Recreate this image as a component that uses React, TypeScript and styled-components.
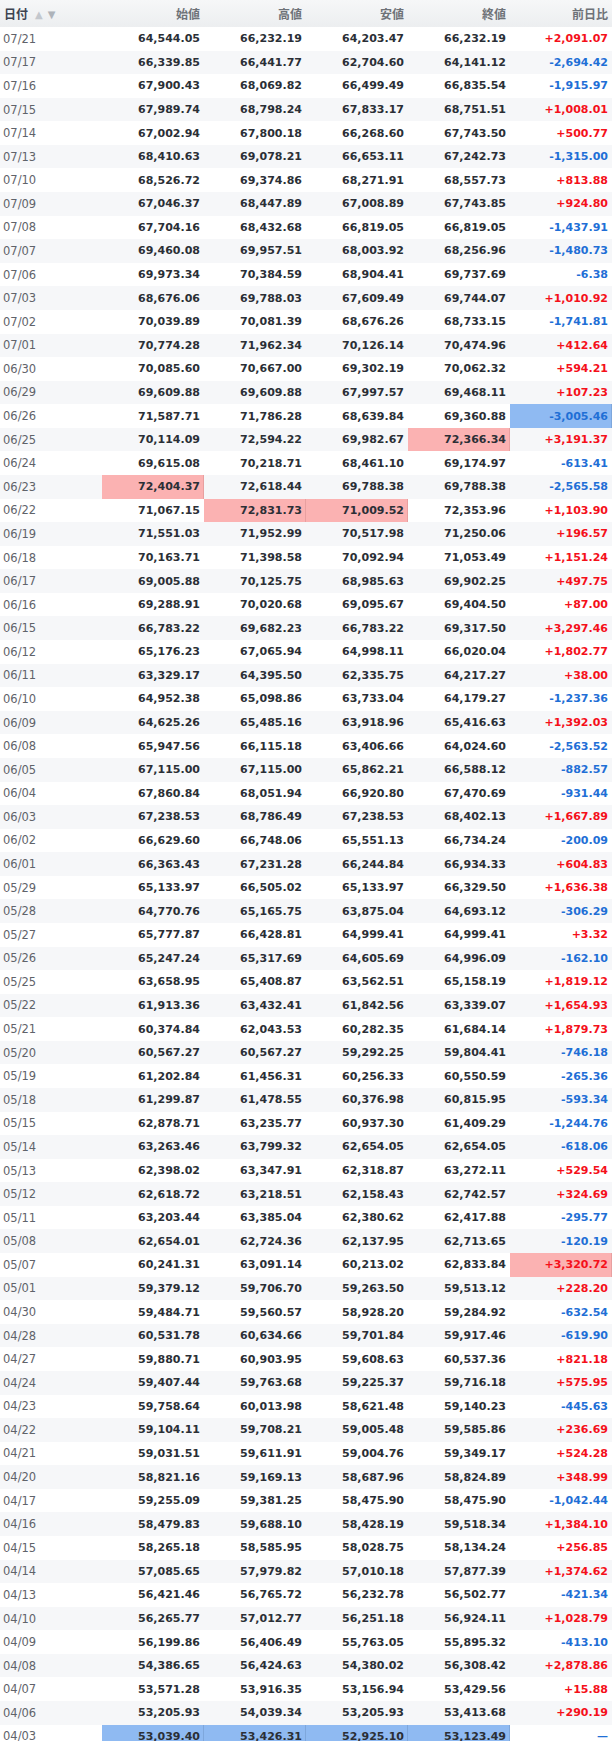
import styled, { createGlobalStyle, css } from "styled-components"

const GlobalStyle = createGlobalStyle`
  html, body {
    margin: 0;
    padding: 0;
    background: #fff;
  }
  body {
    font-family: "DejaVu Sans", Verdana, "Noto Sans CJK JP", sans-serif;
  }
`

// date, open, high, low, close, change
type Row = [string, number, number, number, number, number | null]

const rows: Row[] = [
    ["07/21", 64544.05, 66232.19, 64203.47, 66232.19, 2091.07],
    ["07/17", 66339.85, 66441.77, 62704.60, 64141.12, -2694.42],
    ["07/16", 67900.43, 68069.82, 66499.49, 66835.54, -1915.97],
    ["07/15", 67989.74, 68798.24, 67833.17, 68751.51, 1008.01],
    ["07/14", 67002.94, 67800.18, 66268.60, 67743.50, 500.77],
    ["07/13", 68410.63, 69078.21, 66653.11, 67242.73, -1315.00],
    ["07/10", 68526.72, 69374.86, 68271.91, 68557.73, 813.88],
    ["07/09", 67046.37, 68447.89, 67008.89, 67743.85, 924.80],
    ["07/08", 67704.16, 68432.68, 66819.05, 66819.05, -1437.91],
    ["07/07", 69460.08, 69957.51, 68003.92, 68256.96, -1480.73],
    ["07/06", 69973.34, 70384.59, 68904.41, 69737.69, -6.38],
    ["07/03", 68676.06, 69788.03, 67609.49, 69744.07, 1010.92],
    ["07/02", 70039.89, 70081.39, 68676.26, 68733.15, -1741.81],
    ["07/01", 70774.28, 71962.34, 70126.14, 70474.96, 412.64],
    ["06/30", 70085.60, 70667.00, 69302.19, 70062.32, 594.21],
    ["06/29", 69609.88, 69609.88, 67997.57, 69468.11, 107.23],
    ["06/26", 71587.71, 71786.28, 68639.84, 69360.88, -3005.46],
    ["06/25", 70114.09, 72594.22, 69982.67, 72366.34, 3191.37],
    ["06/24", 69615.08, 70218.71, 68461.10, 69174.97, -613.41],
    ["06/23", 72404.37, 72618.44, 69788.38, 69788.38, -2565.58],
    ["06/22", 71067.15, 72831.73, 71009.52, 72353.96, 1103.90],
    ["06/19", 71551.03, 71952.99, 70517.98, 71250.06, 196.57],
    ["06/18", 70163.71, 71398.58, 70092.94, 71053.49, 1151.24],
    ["06/17", 69005.88, 70125.75, 68985.63, 69902.25, 497.75],
    ["06/16", 69288.91, 70020.68, 69095.67, 69404.50, 87.00],
    ["06/15", 66783.22, 69682.23, 66783.22, 69317.50, 3297.46],
    ["06/12", 65176.23, 67065.94, 64998.11, 66020.04, 1802.77],
    ["06/11", 63329.17, 64395.50, 62335.75, 64217.27, 38.00],
    ["06/10", 64952.38, 65098.86, 63733.04, 64179.27, -1237.36],
    ["06/09", 64625.26, 65485.16, 63918.96, 65416.63, 1392.03],
    ["06/08", 65947.56, 66115.18, 63406.66, 64024.60, -2563.52],
    ["06/05", 67115.00, 67115.00, 65862.21, 66588.12, -882.57],
    ["06/04", 67860.84, 68051.94, 66920.80, 67470.69, -931.44],
    ["06/03", 67238.53, 68786.49, 67238.53, 68402.13, 1667.89],
    ["06/02", 66629.60, 66748.06, 65551.13, 66734.24, -200.09],
    ["06/01", 66363.43, 67231.28, 66244.84, 66934.33, 604.83],
    ["05/29", 65133.97, 66505.02, 65133.97, 66329.50, 1636.38],
    ["05/28", 64770.76, 65165.75, 63875.04, 64693.12, -306.29],
    ["05/27", 65777.87, 66428.81, 64999.41, 64999.41, 3.32],
    ["05/26", 65247.24, 65317.69, 64605.69, 64996.09, -162.10],
    ["05/25", 63658.95, 65408.87, 63562.51, 65158.19, 1819.12],
    ["05/22", 61913.36, 63432.41, 61842.56, 63339.07, 1654.93],
    ["05/21", 60374.84, 62043.53, 60282.35, 61684.14, 1879.73],
    ["05/20", 60567.27, 60567.27, 59292.25, 59804.41, -746.18],
    ["05/19", 61202.84, 61456.31, 60256.33, 60550.59, -265.36],
    ["05/18", 61299.87, 61478.55, 60376.98, 60815.95, -593.34],
    ["05/15", 62878.71, 63235.77, 60937.30, 61409.29, -1244.76],
    ["05/14", 63263.46, 63799.32, 62654.05, 62654.05, -618.06],
    ["05/13", 62398.02, 63347.91, 62318.87, 63272.11, 529.54],
    ["05/12", 62618.72, 63218.51, 62158.43, 62742.57, 324.69],
    ["05/11", 63203.44, 63385.04, 62380.62, 62417.88, -295.77],
    ["05/08", 62654.01, 62724.36, 62137.95, 62713.65, -120.19],
    ["05/07", 60241.31, 63091.14, 60213.02, 62833.84, 3320.72],
    ["05/01", 59379.12, 59706.70, 59263.50, 59513.12, 228.20],
    ["04/30", 59484.71, 59560.57, 58928.20, 59284.92, -632.54],
    ["04/28", 60531.78, 60634.66, 59701.84, 59917.46, -619.90],
    ["04/27", 59880.71, 60903.95, 59608.63, 60537.36, 821.18],
    ["04/24", 59407.44, 59763.68, 59225.37, 59716.18, 575.95],
    ["04/23", 59758.64, 60013.98, 58621.48, 59140.23, -445.63],
    ["04/22", 59104.11, 59708.21, 59005.48, 59585.86, 236.69],
    ["04/21", 59031.51, 59611.91, 59004.76, 59349.17, 524.28],
    ["04/20", 58821.16, 59169.13, 58687.96, 58824.89, 348.99],
    ["04/17", 59255.09, 59381.25, 58475.90, 58475.90, -1042.44],
    ["04/16", 58479.83, 59688.10, 58428.19, 59518.34, 1384.10],
    ["04/15", 58265.18, 58585.95, 58028.75, 58134.24, 256.85],
    ["04/14", 57085.65, 57979.82, 57010.18, 57877.39, 1374.62],
    ["04/13", 56421.46, 56765.72, 56232.78, 56502.77, -421.34],
    ["04/10", 56265.77, 57012.77, 56251.18, 56924.11, 1028.79],
    ["04/09", 56199.86, 56406.49, 55763.05, 55895.32, -413.10],
    ["04/08", 54386.65, 56424.63, 54380.02, 56308.42, 2878.86],
    ["04/07", 53571.28, 53916.35, 53156.94, 53429.56, 15.88],
    ["04/06", 53205.93, 54039.34, 53205.93, 53413.68, 290.19],
    ["04/03", 53039.40, 53426.31, 52925.10, 53123.49, null],
]

const headers = ["始値", "高値", "安値", "終値", "前日比"]

type Mark = "max" | "min" | undefined

const Table = styled.table`
  width: 612px;
  border-collapse: collapse;
  table-layout: fixed;
`

const HeadRow = styled.tr`
  height: 27px;
  background: linear-gradient(#f6f7f8, #eceef0);
`

const HeadCell = styled.th<{ $left?: boolean }>`
  padding: 0 4px;
  font-size: 12px;
  font-weight: bold;
  color: #6e7278;
  text-align: ${p => (p.$left ? "left" : "right")};
  white-space: nowrap;
`

const DateLabel = styled.span`
  color: #3d4350;
`

const SortArrows = styled.span`
  display: inline-flex;
  gap: 5px;
  margin-left: 7px;
  font-size: 10px;
  vertical-align: 1px;
  color: #c3c7cd;

  & > span:last-child {
    color: #aeb3ba;
  }
`

const BodyRow = styled.tr`
  height: 23.58px;
  &:nth-child(even) {
    background: #f6f7f9;
  }
`

const DateCell = styled.td`
  padding: 0 3px;
  font-size: 11.5px;
  color: #5f636a;
  white-space: nowrap;
`

const NumCell = styled.td<{ $mark?: Mark; $sign?: number }>`
  padding: 0 4px;
  font-size: 11px;
  font-weight: bold;
  text-align: right;
  white-space: nowrap;
  color: #2b2f36;
  ${p => p.$sign !== undefined && css`
    color: ${p.$sign > 0 ? "#f5101a" : "#1f6fd6"};
  `}
  ${p => p.$mark === "max" && css`
    background: #fbb2b2;
    box-shadow: inset -1px 0 0 #e8a0a0;
  `}
  ${p => p.$mark === "min" && css`
    background: #8fbaf2;
    box-shadow: inset -1px 0 0 #7ea7dc;
  `}
`

function fmt(n: number) {
    return n.toLocaleString("en-US", { minimumFractionDigits: 2, maximumFractionDigits: 2 })
}

function fmtChange(n: number | null) {
    if (n === null) return "—"
    return (n > 0 ? "+" : "") + fmt(n)
}

// highest and lowest value of each column get a marker colour
function marks(col: number): (v: number | null) => Mark {
    const values = rows.map(r => r[col] as number | null).filter((v): v is number => v !== null)
    const max = Math.max(...values)
    const min = Math.min(...values)
    return v => (v === null ? undefined : v === max ? "max" : v === min ? "min" : undefined)
}

const markers = [1, 2, 3, 4, 5].map(marks)

export default function App() {
    return (
        <>
            <GlobalStyle />
            <Table>
                <thead>
                    <HeadRow>
                        <HeadCell $left>
                            <DateLabel>日付</DateLabel>
                            <SortArrows>
                                <span>▲</span>
                                <span>▼</span>
                            </SortArrows>
                        </HeadCell>
                        {headers.map(h => <HeadCell key={h}>{h}</HeadCell>)}
                    </HeadRow>
                </thead>
                <tbody>
                    {rows.map(row => {
                        const [date, ...vals] = row
                        const change = vals[4]
                        return (
                            <BodyRow key={date}>
                                <DateCell>{date}</DateCell>
                                {vals.slice(0, 4).map((v, i) => (
                                    <NumCell key={i} $mark={markers[i](v)}>{fmt(v as number)}</NumCell>
                                ))}
                                <NumCell $mark={markers[4](change)} $sign={change ?? -1}>
                                    {fmtChange(change)}
                                </NumCell>
                            </BodyRow>
                        )
                    })}
                </tbody>
            </Table>
        </>
    )
}
